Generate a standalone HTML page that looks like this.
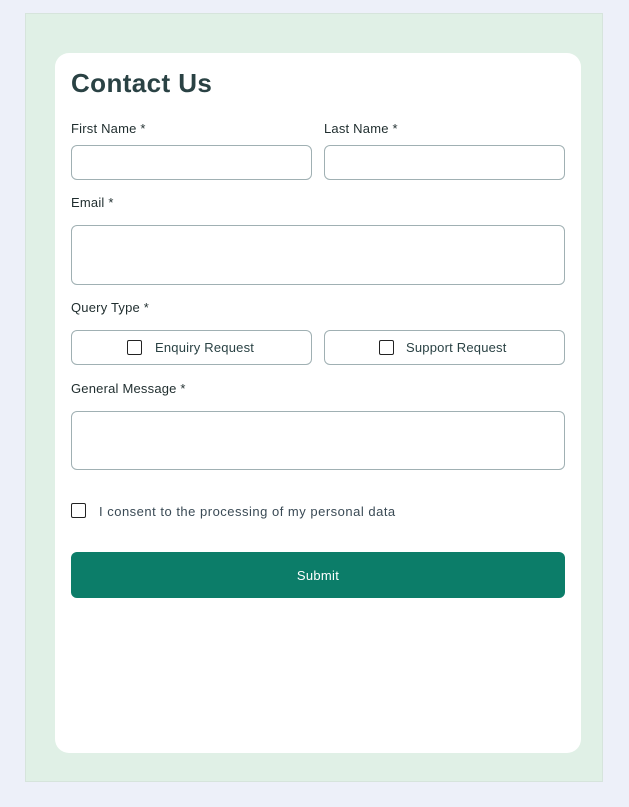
<!DOCTYPE html><html><head><style>
*{box-sizing:border-box;margin:0;padding:0}
body{width:629px;height:807px;background:#edf0f9;font-family:"Liberation Sans",sans-serif;position:relative;overflow:hidden}
.g{position:absolute;left:25px;top:13px;width:578px;height:769px;background:#e0f0e6;border:1px solid #d6e4dc}
.c{position:absolute;left:55px;top:53px;width:526px;height:700px;background:#fff;border-radius:14px}
h1{position:absolute;left:71px;top:68px;font-size:26px;font-weight:bold;color:#2a4244;letter-spacing:0.4px}
.l{position:absolute;font-size:13px;color:#1f2d2e;letter-spacing:0.2px}
.i{position:absolute;border:1px solid #a0b0b3;border-radius:6px;background:#fff}
.cb{position:absolute;width:15px;height:15px;border:1.5px solid #222;border-radius:2px}
.t{position:absolute;font-size:13px;color:#2a4244;letter-spacing:0.2px}
.btn{position:absolute;left:71px;top:552px;width:494px;height:46px;background:#0c7d69;border-radius:6px;color:#fff;font-size:13px;text-align:center;line-height:47px;letter-spacing:0.3px}
</style></head><body>
<div class="g"></div><div class="c"></div>
<h1>Contact Us</h1>
<div class="l" style="left:71px;top:121px">First Name *</div>
<div class="l" style="left:324px;top:121px">Last Name *</div>
<div class="i" style="left:71px;top:145px;width:241px;height:35px"></div>
<div class="i" style="left:324px;top:145px;width:241px;height:35px"></div>
<div class="l" style="left:71px;top:195px">Email *</div>
<div class="i" style="left:71px;top:225px;width:494px;height:60px"></div>
<div class="l" style="left:71px;top:300px">Query Type *</div>
<div class="i" style="left:71px;top:330px;width:241px;height:35px"></div>
<div class="i" style="left:324px;top:330px;width:241px;height:35px"></div>
<div class="cb" style="left:127px;top:340px"></div><div class="t" style="left:155px;top:340px">Enquiry Request</div>
<div class="cb" style="left:379px;top:340px"></div><div class="t" style="left:406px;top:340px">Support Request</div>
<div class="l" style="left:71px;top:381px">General Message *</div>
<div class="i" style="left:71px;top:411px;width:494px;height:59px"></div>
<div class="cb" style="left:71px;top:503px"></div><div class="t" style="left:99px;top:504px;color:#3a4a55;letter-spacing:0.5px">I consent to the processing of my personal data</div>
<div class="btn">Submit</div>
</body></html>
